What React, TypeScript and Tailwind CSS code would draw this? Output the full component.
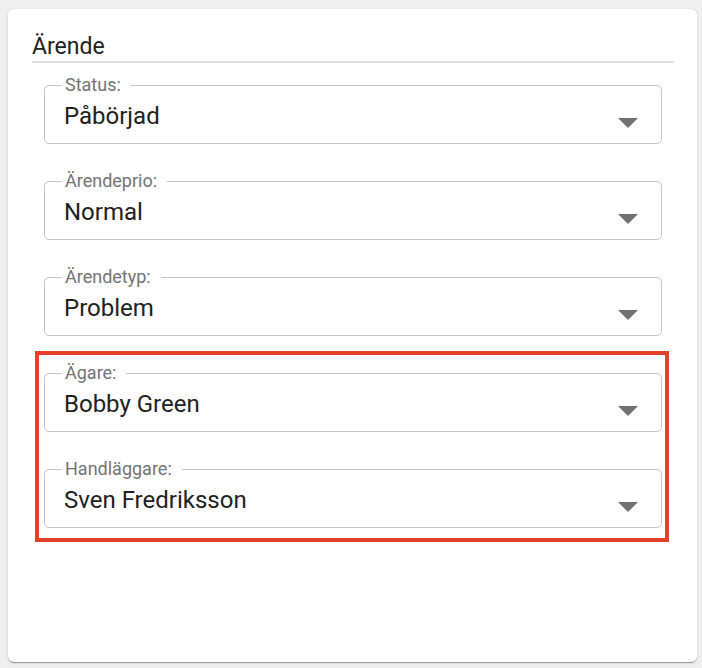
import React from "react";

type FieldProps = { label: string; value: string };

function Caret() {
  return (
    <svg width="20" height="10" viewBox="0 0 20 10" className="shrink-0 mt-[16px]">
      <polygon points="0,0 20,0 10,10" fill="#737373" />
    </svg>
  );
}

function SelectField({ label, value }: FieldProps) {
  return (
    <fieldset className="border border-[#c4c4c4] rounded-[5px] pl-[19px] pr-[23px] pb-[13px]">
      <legend className="-ml-[2px] pl-[3px] pr-[10px] text-[18px] leading-[20px] text-[#737373]">
        {label}
      </legend>
      <div className="flex items-start pt-[7px]">
        <div className="flex-1 text-[24px] leading-[28px] text-[#212121]">{value}</div>
        <Caret />
      </div>
    </fieldset>
  );
}

export default function App() {
  return (
    <div
      className="min-h-[668px] bg-[#efefef] pt-[9px] pl-[8px]"
      style={{ fontFamily: "Roboto, 'Noto Sans', sans-serif" }}
    >
      <div className="w-[689px] h-[653px] bg-white rounded-[6px] shadow-[0px_2px_1px_-1px_rgba(0,0,0,0.2),0px_1px_1px_0px_rgba(0,0,0,0.14),0px_1px_3px_0px_rgba(0,0,0,0.12)] pt-[24px] pl-[24px] pr-[23px]">
        <div className="text-[23px] leading-[28px] text-[#212121] border-b-2 border-[#e0e0e0]">
          Ärende
        </div>
        <div className="mt-[12px] px-[12px] flex flex-col gap-[27px]">
          <SelectField label="Status:" value="Påbörjad" />
          <SelectField label="Ärendeprio:" value="Normal" />
          <SelectField label="Ärendetyp:" value="Problem" />
          <div className="-mt-[12px] -ml-[9px] -mr-[7px] border-[4px] border-[#e8402a] pl-[5px] pr-[3px] pt-[8px] pb-[10px] flex flex-col gap-[27px]">
            <SelectField label="Ägare:" value="Bobby Green" />
            <SelectField label="Handläggare:" value="Sven Fredriksson" />
          </div>
        </div>
      </div>
    </div>
  );
}
